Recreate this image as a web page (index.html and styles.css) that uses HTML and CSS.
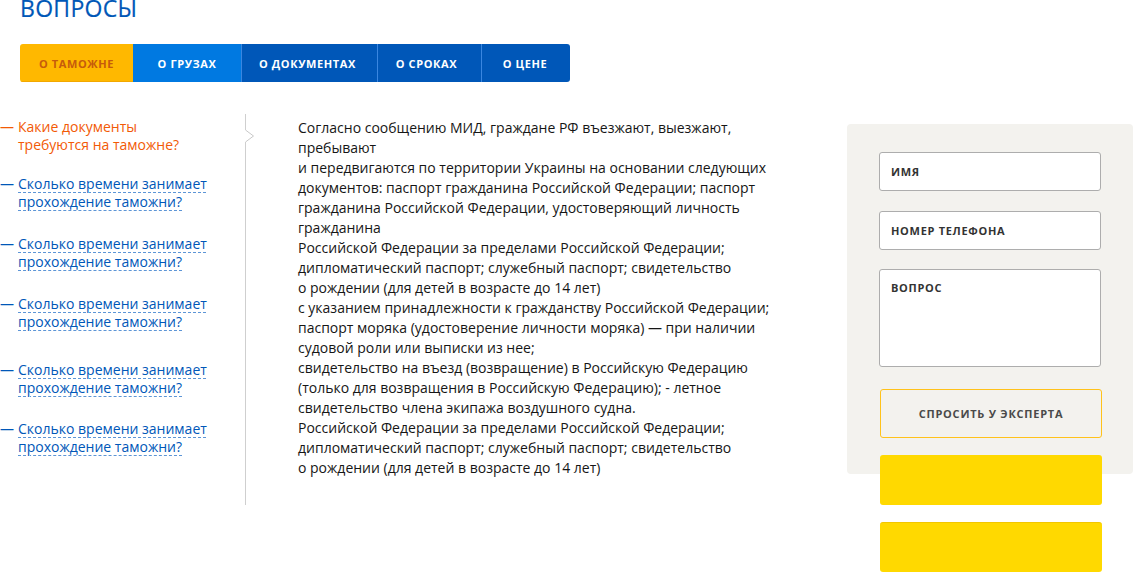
FILE: index.html
```html
<!DOCTYPE html>
<html lang="ru">
<head>
<meta charset="utf-8">
<title>Вопросы</title>
<link rel="stylesheet" href="styles.css">
</head>
<body>
<div class="page">
  <header class="head">
    <h1 class="title">ВОПРОСЫ</h1>
    <nav class="tabs">
      <a class="tab tab-active">О таможне</a>
      <a class="tab tab-light">О грузах</a>
      <a class="tab">О документах</a>
      <a class="tab">О сроках</a>
      <a class="tab">О цене</a>
    </nav>
  </header>

  <div class="row">
    <ul class="faq">
      <li class="faq-item faq-current"><span class="dash">—</span><span class="q">Какие документы<br>требуются на таможне?</span></li>
      <li class="faq-item"><span class="dash">—</span><a class="q link">Сколько времени занимает<br>прохождение таможни?</a></li>
      <li class="faq-item"><span class="dash">—</span><a class="q link">Сколько времени занимает<br>прохождение таможни?</a></li>
      <li class="faq-item"><span class="dash">—</span><a class="q link">Сколько времени занимает<br>прохождение таможни?</a></li>
      <li class="faq-item"><span class="dash">—</span><a class="q link">Сколько времени занимает<br>прохождение таможни?</a></li>
      <li class="faq-item"><span class="dash">—</span><a class="q link">Сколько времени занимает<br>прохождение таможни?</a></li>
    </ul>

    <div class="divider">
      <span class="line line-top"></span>
      <svg class="chevron" width="10" height="12" viewBox="0 0 10 12"><polyline points="0.5,0 8.5,6 0.5,12" fill="none" stroke="#c8c8c8" stroke-width="1"/></svg>
      <span class="line line-rest"></span>
    </div>

    <div class="answer">
      Согласно сообщению МИД, граждане РФ въезжают, выезжают,<br>
      пребывают<br>
      и передвигаются по территории Украины на основании следующих<br>
      документов: паспорт гражданина Российской Федерации; паспорт<br>
      гражданина Российской Федерации, удостоверяющий личность<br>
      гражданина<br>
      Российской Федерации за пределами Российской Федерации;<br>
      дипломатический паспорт; служебный паспорт; свидетельство<br>
      о рождении (для детей в возрасте до 14 лет)<br>
      с указанием принадлежности к гражданству Российской Федерации;<br>
      паспорт моряка (удостоверение личности моряка) — при наличии<br>
      судовой роли или выписки из нее;<br>
      свидетельство на въезд (возвращение) в Российскую Федерацию<br>
      (только для возвращения в Российскую Федерацию); - летное<br>
      свидетельство члена экипажа воздушного судна.<br>
      Российской Федерации за пределами Российской Федерации;<br>
      дипломатический паспорт; служебный паспорт; свидетельство<br>
      о рождении (для детей в возрасте до 14 лет)
    </div>

    <aside class="side">
      <form class="ask">
        <input class="field" type="text" placeholder="ИМЯ">
        <input class="field" type="text" placeholder="НОМЕР ТЕЛЕФОНА">
        <textarea class="field area" placeholder="ВОПРОС"></textarea>
        <button class="ask-btn" type="button">СПРОСИТЬ У ЭКСПЕРТА</button>
      </form>
      <div class="promo"></div>
      <div class="promo promo-second"></div>
    </aside>
  </div>
</div>
</body>
</html>
```

FILE: styles.css
```css
* { box-sizing: border-box; }

html, body {
  margin: 0;
  padding: 0;
  background: #ffffff;
}

body {
  font-family: "Open Sans", "Noto Sans", sans-serif;
  color: #1b1b1b;
  overflow: hidden;
}

.page {
  width: 1134px;
}

.head {
  padding-left: 20px;
}

.title {
  margin: -3px 0 0 0;
  font-size: 23px;
  line-height: 23px;
  font-weight: 400;
  color: #0057b7;
  letter-spacing: 0.3px;
  -webkit-text-stroke: 0.2px #0057b7;
}

.tabs {
  display: flex;
  margin-top: 24px;
  width: 550px;
  height: 38px;
  border-radius: 3px;
  overflow: hidden;
}

.tab {
  display: flex;
  align-items: center;
  justify-content: center;
  height: 38px;
  background: #0057b8;
  color: #ffffff;
  font-size: 11px;
  font-weight: 700;
  letter-spacing: 0.6px;
  text-transform: uppercase;
  border-left: 1px solid #3a86e0;
  white-space: nowrap;
}

.tab:nth-child(1) { width: 113px; border-left: none; }
.tab:nth-child(2) { width: 108px; border-left: none; }
.tab:nth-child(3) { width: 136px; padding-right: 4px; }
.tab:nth-child(4) { width: 104px; padding-right: 6px; }
.tab:nth-child(5) { width: 89px; padding-right: 2px; }

.tab-active {
  background: #ffb800;
  color: #c65b0c;
  padding-top: 1px;
  box-shadow: inset 0 -1px 0 #f2a800;
}

.tab-light {
  background: #0079e1;
}

.row {
  display: flex;
  align-items: flex-start;
  margin-top: 32px;
}

.faq {
  list-style: none;
  margin: 0;
  padding: 4px 0 0 0;
  width: 245px;
  font-size: 14px;
  line-height: 18px;
}

.faq-item {
  display: flex;
  margin-top: 24px;
}

.faq-item:nth-child(1) { margin-top: 0; }
.faq-item:nth-child(2) { margin-top: 21px; }
.faq-item:nth-child(5) { margin-top: 30px; }
.faq-item:nth-child(6) { margin-top: 23px; }

.dash {
  width: 18px;
  flex: none;
  color: #0057b8;
}

.faq-current .dash,
.faq-current .q {
  color: #f25a06;
}

.link {
  color: #0057b8;
  text-decoration: underline dashed #5c95d6;
  text-decoration-thickness: 1px;
  text-underline-offset: 3px;
  cursor: pointer;
}

.divider {
  display: flex;
  flex-direction: column;
  width: 10px;
  height: 391px;
  flex: none;
}

.line {
  display: block;
  width: 1px;
  margin-left: 0;
  background: #cfcfcf;
}

.line-top { height: 16px; flex: none; }
.line-rest { flex: 1; }

.chevron {
  display: block;
  flex: none;
}

.answer {
  padding: 4px 0 0 43px;
  width: 545px;
  font-size: 14px;
  line-height: 20px;
  color: #161616;
  white-space: nowrap;
}

.side {
  margin-left: auto;
  margin-right: 1px;
  margin-top: 10px;
  width: 286px;
  display: flex;
  flex-direction: column;
}

.ask {
  display: flex;
  flex-direction: column;
  gap: 20px;
  padding: 28px 32px 36px 32px;
  background: #f3f2ee;
  border-radius: 4px;
}

.field {
  display: block;
  width: 222px;
  height: 39px;
  margin: 0;
  padding: 0 11px;
  border: 1px solid #adadad;
  border-radius: 3px;
  background: #ffffff;
  font-family: "Open Sans", "Noto Sans", sans-serif;
  font-size: 11px;
  font-weight: 700;
  letter-spacing: 0.7px;
  color: #333333;
  outline: none;
}

.field::placeholder {
  color: #333333;
  opacity: 1;
}

.area {
  height: 98px;
  margin-top: -1px;
  padding-top: 10px;
  resize: none;
  line-height: 16px;
}

.ask-btn {
  margin-top: 2px;
  margin-left: 1px;
  width: 222px;
  height: 49px;
  border: 1px solid #ffc21a;
  border-radius: 3px;
  background: transparent;
  font-family: "Open Sans", "Noto Sans", sans-serif;
  font-size: 11px;
  font-weight: 700;
  letter-spacing: 0.75px;
  color: #4a4a4a;
  padding: 0;
}

.promo {
  width: 222px;
  height: 50px;
  margin: -19px 0 0 33px;
  background: #ffd900;
  border-radius: 3px;
}

.promo-second {
  margin-top: 17px;
  border-top: 1px solid #f2c600;
}
```
